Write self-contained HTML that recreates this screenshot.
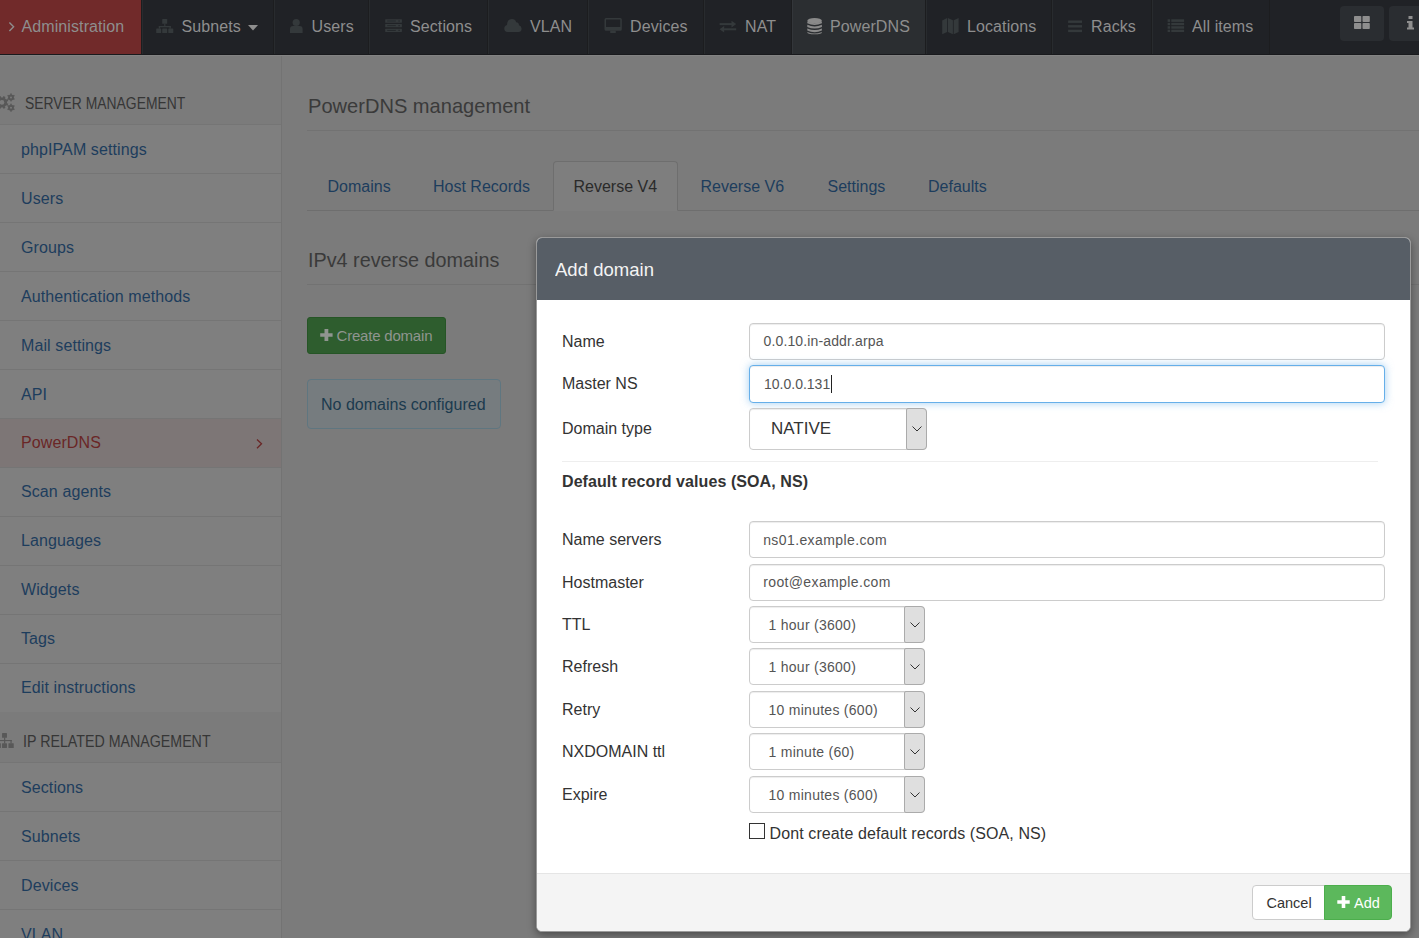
<!DOCTYPE html>
<html><head><meta charset="utf-8"><title>phpIPAM PowerDNS</title>
<style>
html,body{margin:0;padding:0;width:1419px;height:938px;overflow:hidden;background:#7b7b7b;}
body{position:relative;font-family:"Liberation Sans", sans-serif;}
.t{position:absolute;line-height:1;white-space:pre;font-family:"Liberation Sans", sans-serif;}
.b{position:absolute;}
.i{position:absolute;}
</style></head><body>
<div class="b" style="left:0px;top:0px;width:1419px;height:54px;background:#202226"></div>
<div class="b" style="left:0px;top:54px;width:1419px;height:1px;background:#191a1d"></div>
<div class="b" style="left:0px;top:0px;width:141px;height:54px;background:#712a2a"></div>
<div class="b" style="left:792px;top:0px;width:133px;height:54px;background:#2b2e31"></div>
<div class="b" style="left:141px;top:0px;width:1px;height:54px;background:#1c1d1f"></div>
<div class="b" style="left:142px;top:0px;width:1px;height:54px;background:#282b2e"></div>
<div class="b" style="left:273px;top:0px;width:1px;height:54px;background:#1c1d1f"></div>
<div class="b" style="left:274px;top:0px;width:1px;height:54px;background:#282b2e"></div>
<div class="b" style="left:368px;top:0px;width:1px;height:54px;background:#1c1d1f"></div>
<div class="b" style="left:369px;top:0px;width:1px;height:54px;background:#282b2e"></div>
<div class="b" style="left:487px;top:0px;width:1px;height:54px;background:#1c1d1f"></div>
<div class="b" style="left:488px;top:0px;width:1px;height:54px;background:#282b2e"></div>
<div class="b" style="left:587px;top:0px;width:1px;height:54px;background:#1c1d1f"></div>
<div class="b" style="left:588px;top:0px;width:1px;height:54px;background:#282b2e"></div>
<div class="b" style="left:703px;top:0px;width:1px;height:54px;background:#1c1d1f"></div>
<div class="b" style="left:704px;top:0px;width:1px;height:54px;background:#282b2e"></div>
<div class="b" style="left:791px;top:0px;width:1px;height:54px;background:#1c1d1f"></div>
<div class="b" style="left:792px;top:0px;width:1px;height:54px;background:#33363a"></div>
<div class="b" style="left:925px;top:0px;width:1px;height:54px;background:#1c1d1f"></div>
<div class="b" style="left:926px;top:0px;width:1px;height:54px;background:#282b2e"></div>
<div class="b" style="left:1051px;top:0px;width:1px;height:54px;background:#1c1d1f"></div>
<div class="b" style="left:1052px;top:0px;width:1px;height:54px;background:#282b2e"></div>
<div class="b" style="left:1151px;top:0px;width:1px;height:54px;background:#1c1d1f"></div>
<div class="b" style="left:1152px;top:0px;width:1px;height:54px;background:#282b2e"></div>
<div class="b" style="left:1269px;top:0px;width:1px;height:54px;background:#1c1d1f"></div>
<svg class="i" style="left:8px;top:21px" width="8" height="12" viewBox="0 0 8 12"><path fill="none" stroke="#8e8e8e" stroke-width="1.4" d="M1.4 1.6 L5.6 5.8 L1.4 10"/></svg>
<div class="t" style="left:21.5px;top:19.46px;font-size:16px;color:#8e8e8e;letter-spacing:0.1px">Administration</div>
<svg class="i" style="left:0;top:0" width="1419" height="54" viewBox="0 0 1419 54"><g fill="#34393b"><rect x="162.2" y="19" width="5" height="4.8" rx="0.6"/><rect x="164.2" y="23.5" width="1.2" height="3"/><rect x="158.8" y="26" width="12" height="1.3"/><rect x="158.8" y="26" width="1.3" height="2.6"/><rect x="169.5" y="26" width="1.3" height="2.6"/><rect x="156.2" y="28.4" width="5" height="4.7" rx="0.6"/><rect x="162.2" y="28.4" width="5" height="4.7" rx="0.6"/><rect x="168.3" y="28.4" width="5" height="4.7" rx="0.6"/></g><g fill="#34393b"><circle cx="296.2" cy="22.5" r="3.6"/><path d="M290 33 V29 Q290 26 293 26 H299.6 Q302.6 26 302.6 29 V33 Z"/></g><rect x="385.2" y="19.2" width="16.7" height="3.6" rx="0.5" fill="#34393b"/><rect x="387.2" y="20.55" width="8.6" height="0.9" fill="#23262a"/><rect x="398.4" y="20.40" width="1.4" height="1.2" fill="#23262a"/><rect x="385.2" y="24" width="16.7" height="3.3" rx="0.5" fill="#34393b"/><rect x="387.2" y="25.20" width="8.6" height="0.9" fill="#23262a"/><rect x="398.4" y="25.05" width="1.4" height="1.2" fill="#23262a"/><rect x="385.2" y="28.7" width="16.7" height="3.4" rx="0.5" fill="#34393b"/><rect x="387.2" y="29.95" width="8.6" height="0.9" fill="#23262a"/><rect x="398.4" y="29.80" width="1.4" height="1.2" fill="#23262a"/><path fill="#34393b" d="M507.5 32 Q504.3 32 504.3 28.6 Q504.3 25.6 507 25 Q507.3 19 512 19 Q515.2 19 516.2 22.2 Q518.8 22.2 519 25.2 Q521.6 26 521.6 28.8 Q521.4 32 518.4 32 Z"/><g fill="#34393b"><path fill-rule="evenodd" d="M604.5 19.5 Q604.5 18 606 18 H620.3 Q621.8 18 621.8 19.5 V29.3 Q621.8 30.8 620.3 30.8 H606 Q604.5 30.8 604.5 29.3 Z M606 19.6 V26.9 H620.3 V19.6 Z"/><rect x="610.2" y="30.5" width="5.6" height="2.5"/></g><g fill="#34393b"><rect x="719.6" y="23.1" width="12.5" height="2"/><path d="M731.5 20.8 L736.2 24.1 L731.5 27.4 Z"/><rect x="723.5" y="28.3" width="12.7" height="2"/><path d="M724.2 26.1 L719.5 29.3 L724.2 32.6 Z"/></g><g fill="#8a8a8a"><ellipse cx="814.6" cy="20.8" rx="7.3" ry="2.8"/><path d="M807.3 21.5 V23.2 Q814.6 26.8 821.9 23.2 V21.5 Q814.6 25 807.3 21.5 Z"/><path d="M807.3 24.8 V26.9 Q814.6 30.2 821.9 26.9 V24.8 Q814.6 28.3 807.3 24.8 Z"/><path d="M807.3 28.4 V30.6 Q814.6 33.8 821.9 30.6 V28.4 Q814.6 31.8 807.3 28.4 Z"/><path d="M807.3 31.9 V32.2 Q807.3 34.3 814.6 34.3 Q821.9 34.3 821.9 32.2 V31.9 Q814.6 35 807.3 31.9 Z"/></g><g fill="#34393b"><path d="M942.2 20.4 L947.1 18 V32 L942.2 34.2 Z"/><path d="M947.9 18 L952.9 20.2 V34.2 L947.9 32 Z"/><path d="M953.7 20.2 L958.6 18 V32 L953.7 34.2 Z"/></g><g fill="#34393b"><rect x="1068.1" y="20.5" width="13.9" height="2.4"/><rect x="1068.1" y="25.1" width="13.9" height="2.4"/><rect x="1068.1" y="29.7" width="13.9" height="2.4"/></g><rect x="1167.6" y="19.3" width="2.5" height="2.6" fill="#34393b"/><rect x="1171.3" y="19.3" width="12.8" height="2.6" fill="#34393b"/><rect x="1167.6" y="22.9" width="2.5" height="2.3" fill="#34393b"/><rect x="1171.3" y="22.9" width="12.8" height="2.3" fill="#34393b"/><rect x="1167.6" y="26.2" width="2.5" height="2.5" fill="#34393b"/><rect x="1171.3" y="26.2" width="12.8" height="2.5" fill="#34393b"/><rect x="1167.6" y="29.7" width="2.5" height="2.3" fill="#34393b"/><rect x="1171.3" y="29.7" width="12.8" height="2.3" fill="#34393b"/></svg>
<div class="t" style="left:181.5px;top:19.46px;font-size:16px;color:#8e8e8e;letter-spacing:0.1px">Subnets</div>
<div class="t" style="left:311.5px;top:19.46px;font-size:16px;color:#8e8e8e;letter-spacing:0.1px">Users</div>
<div class="t" style="left:410px;top:19.46px;font-size:16px;color:#8e8e8e;letter-spacing:0.1px">Sections</div>
<div class="t" style="left:530px;top:19.46px;font-size:16px;color:#8e8e8e;letter-spacing:0.1px">VLAN</div>
<div class="t" style="left:630px;top:19.46px;font-size:16px;color:#8e8e8e;letter-spacing:0.1px">Devices</div>
<div class="t" style="left:745px;top:19.46px;font-size:16px;color:#8e8e8e;letter-spacing:0.1px">NAT</div>
<div class="t" style="left:830px;top:19.46px;font-size:16px;color:#8e8e8e;letter-spacing:0.1px">PowerDNS</div>
<div class="t" style="left:967px;top:19.46px;font-size:16px;color:#8e8e8e;letter-spacing:0.1px">Locations</div>
<div class="t" style="left:1091px;top:19.46px;font-size:16px;color:#8e8e8e;letter-spacing:0.1px">Racks</div>
<div class="t" style="left:1192px;top:19.46px;font-size:16px;color:#8e8e8e;letter-spacing:0.1px">All items</div>
<svg class="i" style="left:248px;top:25px" width="10" height="6" viewBox="0 0 10 6"><path fill="#8e8e8e" d="M0 0 H10 L5 5.5 Z"/></svg>
<div class="b" style="left:1340px;top:6px;width:44px;height:35px;background:#2a2d31;border-radius:4px"></div>
<div class="b" style="left:1389px;top:6px;width:40px;height:35px;background:#2a2d31;border-radius:4px"></div>
<svg class="i" style="left:1354px;top:16px" width="16" height="13" viewBox="0 0 16 13"><g fill="#8e8e8e"><rect x="0" y="0" width="7.3" height="6" rx="0.8"/><rect x="8.5" y="0" width="7.3" height="6" rx="0.8"/><rect x="0" y="7" width="7.3" height="6" rx="0.8"/><rect x="8.5" y="7" width="7.3" height="6" rx="0.8"/></g></svg>
<svg class="i" style="left:1407px;top:16px" width="8" height="14" viewBox="0 0 8 14"><g fill="#8e8e8e"><rect x="1.5" y="0" width="4" height="3"/><path d="M0 5 H5.5 V11.5 H7 V13.5 H0 V11.5 H1.5 V7 H0 Z"/></g></svg>
<div class="b" style="left:0px;top:55px;width:281px;height:883px;background:#7f7f7f"></div>
<div class="b" style="left:281px;top:55px;width:1px;height:883px;background:#737373"></div>
<div class="b" style="left:0px;top:55px;width:1419px;height:1px;background:#838383"></div>
<div class="b" style="left:0px;top:56px;width:281px;height:68px;background:#7b7b7b"></div>
<svg class="i" style="left:0px;top:88px" width="20" height="24" viewBox="0 0 20 24"><circle cx="2" cy="14.4" r="5.0" fill="#585858"/><rect x="0.90" y="8.00" width="2.2" height="6.40" fill="#585858" transform="rotate(22.5 2 14.4)"/><rect x="0.90" y="8.00" width="2.2" height="6.40" fill="#585858" transform="rotate(67.5 2 14.4)"/><rect x="0.90" y="8.00" width="2.2" height="6.40" fill="#585858" transform="rotate(112.5 2 14.4)"/><rect x="0.90" y="8.00" width="2.2" height="6.40" fill="#585858" transform="rotate(157.5 2 14.4)"/><rect x="0.90" y="8.00" width="2.2" height="6.40" fill="#585858" transform="rotate(202.5 2 14.4)"/><rect x="0.90" y="8.00" width="2.2" height="6.40" fill="#585858" transform="rotate(247.5 2 14.4)"/><rect x="0.90" y="8.00" width="2.2" height="6.40" fill="#585858" transform="rotate(292.5 2 14.4)"/><rect x="0.90" y="8.00" width="2.2" height="6.40" fill="#585858" transform="rotate(337.5 2 14.4)"/><circle cx="2" cy="14.4" r="2.3" fill="#7b7b7b"/><circle cx="11" cy="9.4" r="2.9" fill="#585858"/><rect x="10.25" y="5.45" width="1.5" height="3.95" fill="#585858" transform="rotate(0.0 11 9.4)"/><rect x="10.25" y="5.45" width="1.5" height="3.95" fill="#585858" transform="rotate(60.0 11 9.4)"/><rect x="10.25" y="5.45" width="1.5" height="3.95" fill="#585858" transform="rotate(120.0 11 9.4)"/><rect x="10.25" y="5.45" width="1.5" height="3.95" fill="#585858" transform="rotate(180.0 11 9.4)"/><rect x="10.25" y="5.45" width="1.5" height="3.95" fill="#585858" transform="rotate(240.0 11 9.4)"/><rect x="10.25" y="5.45" width="1.5" height="3.95" fill="#585858" transform="rotate(300.0 11 9.4)"/><circle cx="11" cy="9.4" r="1.0" fill="#7b7b7b"/><circle cx="11" cy="19.7" r="2.9" fill="#585858"/><rect x="10.25" y="15.75" width="1.5" height="3.95" fill="#585858" transform="rotate(0.0 11 19.7)"/><rect x="10.25" y="15.75" width="1.5" height="3.95" fill="#585858" transform="rotate(60.0 11 19.7)"/><rect x="10.25" y="15.75" width="1.5" height="3.95" fill="#585858" transform="rotate(120.0 11 19.7)"/><rect x="10.25" y="15.75" width="1.5" height="3.95" fill="#585858" transform="rotate(180.0 11 19.7)"/><rect x="10.25" y="15.75" width="1.5" height="3.95" fill="#585858" transform="rotate(240.0 11 19.7)"/><rect x="10.25" y="15.75" width="1.5" height="3.95" fill="#585858" transform="rotate(300.0 11 19.7)"/><circle cx="11" cy="19.7" r="1.0" fill="#7b7b7b"/></svg>
<div class="t" style="left:24.5px;top:95.66px;font-size:16px;color:#363636;transform:scaleX(0.868);transform-origin:0 0">SERVER MANAGEMENT</div>
<div class="b" style="left:0px;top:124px;width:281px;height:1px;background:#757575"></div>
<div class="t" style="left:21px;top:141.91px;font-size:16px;color:#1d3d5d;letter-spacing:0.1px">phpIPAM settings</div>
<div class="b" style="left:0px;top:173px;width:281px;height:1px;background:#757575"></div>
<div class="t" style="left:21px;top:190.91px;font-size:16px;color:#1d3d5d;letter-spacing:0.1px">Users</div>
<div class="b" style="left:0px;top:222px;width:281px;height:1px;background:#757575"></div>
<div class="t" style="left:21px;top:239.91px;font-size:16px;color:#1d3d5d;letter-spacing:0.1px">Groups</div>
<div class="b" style="left:0px;top:271px;width:281px;height:1px;background:#757575"></div>
<div class="t" style="left:21px;top:288.91px;font-size:16px;color:#1d3d5d;letter-spacing:0.1px">Authentication methods</div>
<div class="b" style="left:0px;top:320px;width:281px;height:1px;background:#757575"></div>
<div class="t" style="left:21px;top:337.91px;font-size:16px;color:#1d3d5d;letter-spacing:0.1px">Mail settings</div>
<div class="b" style="left:0px;top:369px;width:281px;height:1px;background:#757575"></div>
<div class="t" style="left:21px;top:386.91px;font-size:16px;color:#1d3d5d;letter-spacing:0.1px">API</div>
<div class="b" style="left:0px;top:418px;width:281px;height:1px;background:#757575"></div>
<div class="b" style="left:0px;top:419px;width:281px;height:48px;background:#7d7676"></div>
<div class="t" style="left:21px;top:434.91px;font-size:16px;color:#6a2626;letter-spacing:0.1px">PowerDNS</div>
<svg class="i" style="left:255.5px;top:439px" width="7" height="10" viewBox="0 0 7 10"><path fill="none" stroke="#6a2626" stroke-width="1.3" d="M1 0.5 L5.5 4.8 L1 9.2"/></svg>
<div class="b" style="left:0px;top:467px;width:281px;height:1px;background:#757575"></div>
<div class="t" style="left:21px;top:483.91px;font-size:16px;color:#1d3d5d;letter-spacing:0.1px">Scan agents</div>
<div class="b" style="left:0px;top:516px;width:281px;height:1px;background:#757575"></div>
<div class="t" style="left:21px;top:532.91px;font-size:16px;color:#1d3d5d;letter-spacing:0.1px">Languages</div>
<div class="b" style="left:0px;top:565px;width:281px;height:1px;background:#757575"></div>
<div class="t" style="left:21px;top:581.91px;font-size:16px;color:#1d3d5d;letter-spacing:0.1px">Widgets</div>
<div class="b" style="left:0px;top:614px;width:281px;height:1px;background:#757575"></div>
<div class="t" style="left:21px;top:630.91px;font-size:16px;color:#1d3d5d;letter-spacing:0.1px">Tags</div>
<div class="b" style="left:0px;top:663px;width:281px;height:1px;background:#757575"></div>
<div class="t" style="left:21px;top:679.91px;font-size:16px;color:#1d3d5d;letter-spacing:0.1px">Edit instructions</div>
<div class="b" style="left:0px;top:712px;width:281px;height:1px;background:#757575"></div>
<div class="b" style="left:0px;top:712px;width:281px;height:50px;background:#7b7b7b"></div>
<svg class="i" style="left:0px;top:728px" width="20" height="24" viewBox="160.15 14 20 24"><g fill="#585858"><rect x="162.2" y="19" width="4.9" height="4.8" rx="0.5"/><rect x="164.2" y="23.5" width="1.2" height="3"/><rect x="156" y="26" width="16" height="1.1"/><rect x="164.2" y="26" width="1.2" height="3.4"/><rect x="170.6" y="26" width="1.2" height="3.4"/><rect x="156" y="29.3" width="5" height="4.6" rx="0.5"/><rect x="162.2" y="29.3" width="4.9" height="4.6" rx="0.5"/><rect x="168.6" y="29.3" width="5.3" height="4.6" rx="0.5"/></g></svg>
<div class="t" style="left:23px;top:733.96px;font-size:16px;color:#363636;transform:scaleX(0.889);transform-origin:0 0">IP RELATED MANAGEMENT</div>
<div class="b" style="left:0px;top:762px;width:281px;height:1px;background:#757575"></div>
<div class="t" style="left:21px;top:779.96px;font-size:16px;color:#1d3d5d;letter-spacing:0.1px">Sections</div>
<div class="b" style="left:0px;top:811px;width:281px;height:1px;background:#757575"></div>
<div class="t" style="left:21px;top:828.96px;font-size:16px;color:#1d3d5d;letter-spacing:0.1px">Subnets</div>
<div class="b" style="left:0px;top:860px;width:281px;height:1px;background:#757575"></div>
<div class="t" style="left:21px;top:877.96px;font-size:16px;color:#1d3d5d;letter-spacing:0.1px">Devices</div>
<div class="b" style="left:0px;top:909px;width:281px;height:1px;background:#757575"></div>
<div class="t" style="left:21px;top:926.96px;font-size:16px;color:#1d3d5d;letter-spacing:0.1px">VLAN</div>
<div class="b" style="left:0px;top:958px;width:281px;height:1px;background:#757575"></div>
<div class="b" style="left:282px;top:56px;width:1137px;height:882px;background:#7b7b7b"></div>
<div class="t" style="left:308px;top:94.67px;font-size:21px;color:#3a3a3a;transform:scaleX(0.956);transform-origin:0 0">PowerDNS management</div>
<div class="b" style="left:307px;top:130px;width:1112px;height:1px;background:#727272"></div>
<div class="b" style="left:307px;top:210px;width:1112px;height:1px;background:#6e6e6e"></div>
<div class="b" style="left:553px;top:161px;width:125px;height:50px;background:#7e7e7e;border:1px solid #6e6e6e;border-bottom-color:#7e7e7e;border-radius:4px 4px 0 0;box-sizing:border-box"></div>
<div class="t" style="left:327.5px;top:178.76px;font-size:16px;color:#1d3d5d;">Domains</div>
<div class="t" style="left:433px;top:178.76px;font-size:16px;color:#1d3d5d;">Host Records</div>
<div class="t" style="left:573.5px;top:178.76px;font-size:16px;color:#2a2a2a;">Reverse V4</div>
<div class="t" style="left:700.5px;top:178.76px;font-size:16px;color:#1d3d5d;">Reverse V6</div>
<div class="t" style="left:827.5px;top:178.76px;font-size:16px;color:#1d3d5d;">Settings</div>
<div class="t" style="left:928px;top:178.76px;font-size:16px;color:#1d3d5d;">Defaults</div>
<div class="t" style="left:308px;top:248.67px;font-size:21px;color:#3a3a3a;transform:scaleX(0.942);transform-origin:0 0">IPv4 reverse domains</div>
<div class="b" style="left:307px;top:284px;width:1112px;height:1px;background:#727272"></div>
<div class="b" style="left:307px;top:317px;width:139px;height:37px;background:#2e5d2e;border:1px solid #265526;border-radius:3px;box-sizing:border-box"></div>
<svg class="i" style="left:320px;top:329px" width="13" height="12" viewBox="0 0 13 12"><path fill="#909590" d="M4.5 0 H8.3 V4.2 H12.6 V7.8 H8.3 V12 H4.5 V7.8 H0.2 V4.2 H4.5 Z"/></svg>
<div class="t" style="left:336.5px;top:328.10px;font-size:15px;color:#909590;letter-spacing:-0.2px">Create domain</div>
<div class="b" style="left:307px;top:379px;width:194px;height:50px;background:#767c7f;border:1px solid #5f7680;border-radius:4px;box-sizing:border-box"></div>
<div class="t" style="left:321px;top:397.26px;font-size:16px;color:#1b3a4e;">No domains configured</div>
<div class="b" style="left:536px;top:237px;width:875px;height:695px;background:#fff;border:1px solid #9a9a9a;border-radius:6px;box-sizing:border-box;box-shadow:0 3px 9px rgba(0,0,0,.4)"></div>
<div class="b" style="left:537px;top:238px;width:873px;height:62px;background:#575e66;border-radius:5px 5px 0 0"></div>
<div class="t" style="left:555px;top:260.37px;font-size:19px;color:#f4f4f4;transform:scaleX(0.976);transform-origin:0 0">Add domain</div>
<div class="b" style="left:537px;top:873px;width:873px;height:1px;background:#e5e5e5"></div>
<div class="b" style="left:537px;top:874px;width:873px;height:57px;background:#f4f4f4;border-radius:0 0 5px 5px"></div>
<div class="t" style="left:562px;top:333.56px;font-size:16px;color:#333;">Name</div>
<div class="b" style="left:749px;top:323px;width:636px;height:37px;background:#fff;border:1px solid #ccc;border-radius:4px;box-sizing:border-box;box-shadow:inset 0 1px 1px rgba(0,0,0,.075);"></div>
<div class="t" style="left:763.5px;top:334.05px;font-size:14px;color:#555;letter-spacing:0.14px">0.0.10.in-addr.arpa</div>
<div class="t" style="left:562px;top:375.91px;font-size:16px;color:#333;">Master NS</div>
<div class="b" style="left:749px;top:365px;width:636px;height:38px;background:#fff;border:1px solid #66afe9;border-radius:4px;box-sizing:border-box;box-shadow:inset 0 1px 1px rgba(0,0,0,.075),0 0 8px rgba(102,175,233,.6);"></div>
<div class="t" style="left:764px;top:376.60px;font-size:14px;color:#555;">10.0.0.131</div>
<div class="b" style="left:831px;top:375px;width:1px;height:18px;background:#222"></div>
<div class="t" style="left:562px;top:420.91px;font-size:16px;color:#333;">Domain type</div>
<div class="b" style="left:749px;top:408px;width:178px;height:42px;background:#fff;border:1px solid #ccc;border-radius:4px;box-sizing:border-box;box-shadow:inset 0 1px 1px rgba(0,0,0,.075)"></div><div class="b" style="left:906px;top:408px;width:21px;height:42px;background:#dfdfdf;border:1px solid #ababab;border-radius:2px 4px 4px 2px;box-sizing:border-box"></div><svg class="i" style="left:912px;top:426.0px" width="10" height="6" viewBox="0 0 10 6"><path fill="none" stroke="#333" stroke-width="1" d="M0.5 0.5 L5 5 L9.5 0.5"/></svg><div class="t" style="left:771px;top:420.41px;font-size:17px;color:#333;letter-spacing:0px">NATIVE</div>
<div class="b" style="left:562px;top:461px;width:816px;height:1px;background:#eee"></div>
<div class="t" style="left:562px;top:473.91px;font-size:16px;color:#333;font-weight:700;letter-spacing:0.08px">Default record values (SOA, NS)</div>
<div class="t" style="left:562px;top:531.96px;font-size:16px;color:#333;">Name servers</div>
<div class="b" style="left:749px;top:521px;width:636px;height:37px;background:#fff;border:1px solid #ccc;border-radius:4px;box-sizing:border-box;box-shadow:inset 0 1px 1px rgba(0,0,0,.075);"></div>
<div class="t" style="left:763.2px;top:532.65px;font-size:14px;color:#555;letter-spacing:0.4px">ns01.example.com</div>
<div class="t" style="left:562px;top:574.76px;font-size:16px;color:#333;">Hostmaster</div>
<div class="b" style="left:749px;top:564px;width:636px;height:37px;background:#fff;border:1px solid #ccc;border-radius:4px;box-sizing:border-box;box-shadow:inset 0 1px 1px rgba(0,0,0,.075);"></div>
<div class="t" style="left:763.2px;top:574.95px;font-size:14px;color:#555;letter-spacing:0.37px">root@example.com</div>
<div class="t" style="left:562px;top:617.26px;font-size:16px;color:#333;">TTL</div>
<div class="b" style="left:749px;top:606px;width:176px;height:37px;background:#fff;border:1px solid #ccc;border-radius:4px;box-sizing:border-box;box-shadow:inset 0 1px 1px rgba(0,0,0,.075)"></div><div class="b" style="left:904px;top:606px;width:21px;height:37px;background:#dfdfdf;border:1px solid #ababab;border-radius:2px 4px 4px 2px;box-sizing:border-box"></div><svg class="i" style="left:910px;top:621.5px" width="10" height="6" viewBox="0 0 10 6"><path fill="none" stroke="#333" stroke-width="1" d="M0.5 0.5 L5 5 L9.5 0.5"/></svg><div class="t" style="left:768.5px;top:617.75px;font-size:14px;color:#555;letter-spacing:0.27px">1 hour (3600)</div>
<div class="t" style="left:562px;top:659.26px;font-size:16px;color:#333;">Refresh</div>
<div class="b" style="left:749px;top:648px;width:176px;height:37px;background:#fff;border:1px solid #ccc;border-radius:4px;box-sizing:border-box;box-shadow:inset 0 1px 1px rgba(0,0,0,.075)"></div><div class="b" style="left:904px;top:648px;width:21px;height:37px;background:#dfdfdf;border:1px solid #ababab;border-radius:2px 4px 4px 2px;box-sizing:border-box"></div><svg class="i" style="left:910px;top:663.5px" width="10" height="6" viewBox="0 0 10 6"><path fill="none" stroke="#333" stroke-width="1" d="M0.5 0.5 L5 5 L9.5 0.5"/></svg><div class="t" style="left:768.5px;top:659.75px;font-size:14px;color:#555;letter-spacing:0.27px">1 hour (3600)</div>
<div class="t" style="left:562px;top:702.26px;font-size:16px;color:#333;">Retry</div>
<div class="b" style="left:749px;top:691px;width:176px;height:37px;background:#fff;border:1px solid #ccc;border-radius:4px;box-sizing:border-box;box-shadow:inset 0 1px 1px rgba(0,0,0,.075)"></div><div class="b" style="left:904px;top:691px;width:21px;height:37px;background:#dfdfdf;border:1px solid #ababab;border-radius:2px 4px 4px 2px;box-sizing:border-box"></div><svg class="i" style="left:910px;top:706.5px" width="10" height="6" viewBox="0 0 10 6"><path fill="none" stroke="#333" stroke-width="1" d="M0.5 0.5 L5 5 L9.5 0.5"/></svg><div class="t" style="left:768.5px;top:702.75px;font-size:14px;color:#555;letter-spacing:0.27px">10 minutes (600)</div>
<div class="t" style="left:562px;top:744.26px;font-size:16px;color:#333;">NXDOMAIN ttl</div>
<div class="b" style="left:749px;top:733px;width:176px;height:37px;background:#fff;border:1px solid #ccc;border-radius:4px;box-sizing:border-box;box-shadow:inset 0 1px 1px rgba(0,0,0,.075)"></div><div class="b" style="left:904px;top:733px;width:21px;height:37px;background:#dfdfdf;border:1px solid #ababab;border-radius:2px 4px 4px 2px;box-sizing:border-box"></div><svg class="i" style="left:910px;top:748.5px" width="10" height="6" viewBox="0 0 10 6"><path fill="none" stroke="#333" stroke-width="1" d="M0.5 0.5 L5 5 L9.5 0.5"/></svg><div class="t" style="left:768.5px;top:744.75px;font-size:14px;color:#555;letter-spacing:0.27px">1 minute (60)</div>
<div class="t" style="left:562px;top:787.26px;font-size:16px;color:#333;">Expire</div>
<div class="b" style="left:749px;top:776px;width:176px;height:37px;background:#fff;border:1px solid #ccc;border-radius:4px;box-sizing:border-box;box-shadow:inset 0 1px 1px rgba(0,0,0,.075)"></div><div class="b" style="left:904px;top:776px;width:21px;height:37px;background:#dfdfdf;border:1px solid #ababab;border-radius:2px 4px 4px 2px;box-sizing:border-box"></div><svg class="i" style="left:910px;top:791.5px" width="10" height="6" viewBox="0 0 10 6"><path fill="none" stroke="#333" stroke-width="1" d="M0.5 0.5 L5 5 L9.5 0.5"/></svg><div class="t" style="left:768.5px;top:787.75px;font-size:14px;color:#555;letter-spacing:0.27px">10 minutes (600)</div>
<div class="b" style="left:749px;top:823px;width:16px;height:16px;background:#fff;border:1.5px solid #333;box-sizing:border-box"></div>
<div class="t" style="left:769.6px;top:825.91px;font-size:16px;color:#333;letter-spacing:0.1px">Dont create default records (SOA, NS)</div>
<div class="b" style="left:1252px;top:885px;width:73px;height:35px;background:#fff;border:1px solid #ccc;border-radius:4px 0 0 4px;box-sizing:border-box"></div>
<div class="t" style="left:1266.5px;top:895.53px;font-size:14.5px;color:#333;">Cancel</div>
<div class="b" style="left:1324px;top:885px;width:68px;height:35px;background:#5cb85c;border:1px solid #4cae4c;border-radius:0 4px 4px 0;box-sizing:border-box"></div>
<svg class="i" style="left:1337px;top:896px" width="13" height="12" viewBox="0 0 13 12"><path fill="#fff" d="M4.7 0 H8.3 V4.2 H12.7 V7.8 H8.3 V12 H4.7 V7.8 H0.3 V4.2 H4.7 Z"/></svg>
<div class="t" style="left:1354px;top:895.53px;font-size:14.5px;color:#fff;">Add</div>
</body></html>
